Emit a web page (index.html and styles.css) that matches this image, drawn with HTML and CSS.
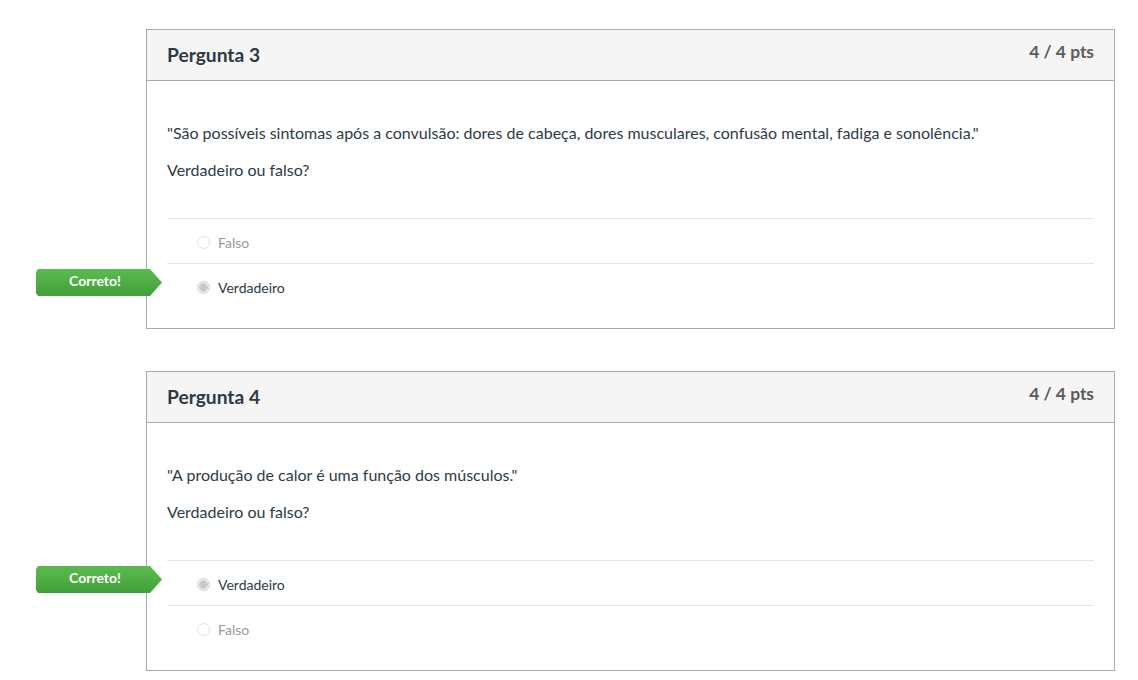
FILE: index.html
```
<!DOCTYPE html>
<html lang="pt-BR">
<head>
    <meta charset="UTF-8">
    <title>Quiz</title>
    <link rel="stylesheet" href="styles.css">
</head>
<body>
    <div class="quiz">
        <!-- Pergunta 3 -->
        <div class="question">
            <div class="question-header">
                <h2>Pergunta 3</h2>
                <span class="points">4 / 4 pts</span>
            </div>
            <div class="question-body">
                <div class="question-text">
                    <p>"São possíveis sintomas após a convulsão: dores de cabeça, dores musculares, confusão mental, fadiga e sonolência."</p>
                    <p>Verdadeiro ou falso?</p>
                </div>
                <ul class="answers">
                    <li class="answer">
                        <span class="radio"></span>
                        <span class="answer-text">Falso</span>
                    </li>
                    <li class="answer selected">
                        <span class="badge">Correto!</span>
                        <span class="radio"></span>
                        <span class="answer-text">Verdadeiro</span>
                    </li>
                </ul>
            </div>
        </div>

        <!-- Pergunta 4 -->
        <div class="question">
            <div class="question-header">
                <h2>Pergunta 4</h2>
                <span class="points">4 / 4 pts</span>
            </div>
            <div class="question-body">
                <div class="question-text">
                    <p>"A produção de calor é uma função dos músculos."</p>
                    <p>Verdadeiro ou falso?</p>
                </div>
                <ul class="answers">
                    <li class="answer selected">
                        <span class="badge">Correto!</span>
                        <span class="radio"></span>
                        <span class="answer-text">Verdadeiro</span>
                    </li>
                    <li class="answer">
                        <span class="radio"></span>
                        <span class="answer-text">Falso</span>
                    </li>
                </ul>
            </div>
        </div>
    </div>
</body>
</html>
```

FILE: styles.css
```
body {
    margin: 0;
    background: #fff;
    color: #2d3b45;
    font-family: Lato, "Liberation Sans", sans-serif;
}

.quiz {
    padding: 29px 0 0 146px;
    width: 969px;
}

.question {
    border: 1px solid #aaaaaa;
}

.question + .question {
    margin-top: 42px;
}

.question-header {
    display: flex;
    justify-content: space-between;
    align-items: flex-start;
    height: 51px;
    box-sizing: border-box;
    padding: 14px 20px 0;
    background: #f5f5f5;
    border-bottom: 1px solid #aaaaaa;
}

.question-header h2 {
    margin: 0;
    font-size: 19.2px;
    line-height: 22px;
    font-weight: 700;
    color: #2d3b45;
}

.points {
    font-size: 17.4px;
    line-height: 16px;
    font-weight: 700;
    color: #5b5b5b;
}

.question-body {
    padding: 27px 20px 20px;
}

.question-text p {
    margin: 13px 0;
    font-size: 16px;
    line-height: 24px;
}

.answers {
    list-style: none;
    margin: 36px 0 0;
    padding: 0;
}

.answer {
    position: relative;
    display: flex;
    align-items: center;
    height: 42px;
    padding: 2px 0 0 30px;
    border-top: 1px solid #e6e6e6;
    font-size: 14px;
    color: #999;
}

.answer.selected {
    color: #2d3b45;
}

.radio {
    width: 11px;
    height: 11px;
    border: 1px solid #e4e4e4;
    border-radius: 50%;
    background: #fff;
    margin-right: 8px;
    box-sizing: content-box;
}

.answer.selected .radio {
    border-color: #d0d0d0;
    background: radial-gradient(circle, #c9c9c9 0, #c9c9c9 4px, #f4f4f4 4.5px);
}

.badge {
    position: absolute;
    left: -131px;
    top: 5px;
    width: 118px;
    height: 27px;
    padding-right: 8px;
    line-height: 24px;
    text-align: center;
    font-size: 14px;
    font-weight: 700;
    color: #fff;
    background: linear-gradient(#5cbb4f, #40a039);
    clip-path: polygon(0 3px, 2px 0, 114px 0, 126px 13.5px, 114px 27px, 2px 27px, 0 24px);
}
```
